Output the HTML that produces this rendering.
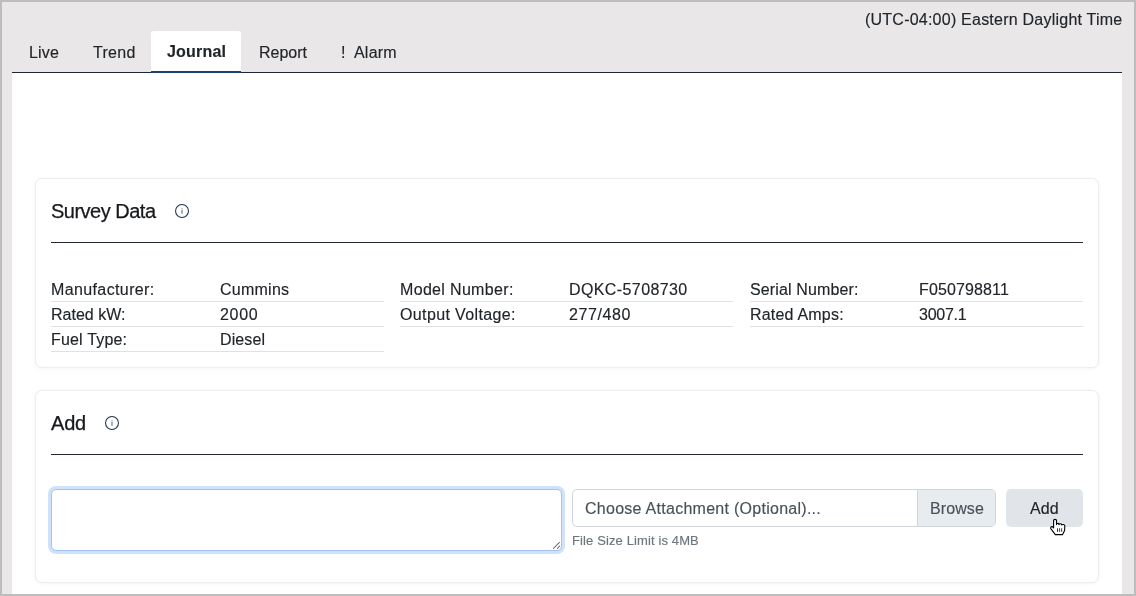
<!DOCTYPE html>
<html><head><meta charset="utf-8">
<style>
*{box-sizing:border-box;margin:0;padding:0}
html,body{width:1136px;height:596px;overflow:hidden;background:#bdbdbd}
body{font-family:"Liberation Sans",sans-serif;color:#212529;position:relative}
.frame{position:absolute;left:2px;top:2px;width:1132px;height:592px;background:#e9e7e8;overflow:hidden}
.t{position:absolute;white-space:nowrap;font-size:16px;line-height:16px;will-change:transform;-webkit-text-stroke:0.15px currentColor}
.panel{position:absolute;left:10px;top:71px;width:1110px;height:530px;background:#fff}
.tabline{position:absolute;left:10px;top:70px;width:1110px;height:1px;background:#202437}
.card{position:absolute;left:33px;width:1064px;background:#fff;border-radius:7px;border:1px solid #eeeef2;box-shadow:0 0 2px rgba(20,20,60,.045),0 1px 4px rgba(20,20,60,.035)}
.hr{position:absolute;height:1px;background:#25283d}
.rowline{position:absolute;height:1px;background:#dfe1e4}
.info{position:absolute;width:16px;height:16px}
</style></head>
<body>
<div class="frame">
<div class="t" style="left:863px;top:10px;letter-spacing:0.23px">(UTC-04:00) Eastern Daylight Time</div>
<div style="position:absolute;left:149px;top:29px;width:90px;height:42px;background:#fff;border-radius:3px 3px 0 0"></div>
<div class="t" style="left:27px;top:43px;letter-spacing:0.15px">Live</div>
<div class="t" style="left:91px;top:43px;letter-spacing:0.3px">Trend</div>
<div class="t" style="left:165px;top:42px;letter-spacing:0.2px;font-weight:bold">Journal</div>
<div class="t" style="left:257px;top:43px">Report</div>
<div class="t" style="left:339px;top:43px">!</div>
<div class="t" style="left:352px;top:43px;letter-spacing:0.2px">Alarm</div>
<div class="panel"></div>
<div class="tabline"></div>
<div style="position:absolute;left:149px;top:69px;width:90px;height:2px;background:#1d406e"></div>
<div class="card" style="top:176px;height:190px"></div>
<div class="t" style="left:49px;top:199px;letter-spacing:-0.5px;font-size:20px;line-height:20px;color:#16181b;-webkit-text-stroke:0.25px #16181b">Survey Data</div>
<svg class="info" style="left:172px;top:201px" viewBox="0 0 16 16"><circle cx="8" cy="8" r="6.45" fill="none" stroke="#1f3352" stroke-width="1.05"/><rect x="7.3" y="6.9" width="1.4" height="3.8" fill="#7f8e96"/><rect x="7.3" y="5.1" width="1.4" height="1.2" fill="#b5ab9c"/></svg>
<div class="hr" style="left:49px;top:240px;width:1032px"></div>
<div class="t" style="left:49px;top:280px;letter-spacing:0.38px">Manufacturer:</div>
<div class="t" style="left:218px;top:280px;letter-spacing:0.25px">Cummins</div>
<div class="rowline" style="left:49px;top:299px;width:333px"></div>
<div class="t" style="left:49px;top:305px">Rated kW:</div>
<div class="t" style="left:218px;top:305px;letter-spacing:0.7px">2000</div>
<div class="rowline" style="left:49px;top:324px;width:333px"></div>
<div class="t" style="left:49px;top:330px;letter-spacing:0.18px">Fuel Type:</div>
<div class="t" style="left:218px;top:330px;letter-spacing:0.1px">Diesel</div>
<div class="rowline" style="left:49px;top:349px;width:333px"></div>
<div class="t" style="left:398px;top:280px;letter-spacing:0.33px">Model Number:</div>
<div class="t" style="left:567px;top:280px;letter-spacing:0.4px">DQKC-5708730</div>
<div class="rowline" style="left:398px;top:299px;width:333px"></div>
<div class="t" style="left:398px;top:305px;letter-spacing:0.37px">Output Voltage:</div>
<div class="t" style="left:567px;top:305px;letter-spacing:0.6px">277/480</div>
<div class="rowline" style="left:398px;top:324px;width:333px"></div>
<div class="t" style="left:748px;top:280px;letter-spacing:0.13px">Serial Number:</div>
<div class="t" style="left:917px;top:280px;letter-spacing:0.13px">F050798811</div>
<div class="rowline" style="left:748px;top:299px;width:333px"></div>
<div class="t" style="left:748px;top:305px;letter-spacing:0.2px">Rated Amps:</div>
<div class="t" style="left:917px;top:305px;letter-spacing:-0.25px">3007.1</div>
<div class="rowline" style="left:748px;top:324px;width:333px"></div>
<div class="card" style="top:388px;height:193px"></div>
<div class="t" style="left:49px;top:411px;letter-spacing:-0.2px;font-size:20px;line-height:20px;color:#16181b;-webkit-text-stroke:0.25px #16181b">Add</div>
<svg class="info" style="left:102px;top:413px" viewBox="0 0 16 16"><circle cx="8" cy="8" r="6.45" fill="none" stroke="#1f3352" stroke-width="1.05"/><rect x="7.3" y="6.9" width="1.4" height="3.8" fill="#7f8e96"/><rect x="7.3" y="5.1" width="1.4" height="1.2" fill="#b5ab9c"/></svg>
<div class="hr" style="left:49px;top:452px;width:1032px"></div>
<div style="position:absolute;left:49px;top:487px;width:511px;height:62px;border:1px solid #9ec3f4;border-radius:5px;box-shadow:0 0 0 3px #cfe1fb;background:#fff"></div>
<svg style="position:absolute;left:548px;top:537px" width="10" height="10" viewBox="0 0 10 10"><path d="M3.3 9.5 L9.7 3.1 M7.2 9.5 L9.7 7" stroke="#333" stroke-width="1.1" stroke-dasharray="0.8 0.61"/></svg>
<div style="position:absolute;left:570px;top:487px;width:424px;height:38px;border:1px solid #ced4da;border-radius:5px;background:#fff;overflow:hidden"><div style="position:absolute;right:0;top:0;width:78px;height:36px;background:#e9ecef;border-left:1px solid #ced4da"></div></div>
<div class="t" style="left:583px;top:499px;letter-spacing:0.27px;color:#495057">Choose Attachment (Optional)...</div>
<div class="t" style="left:928px;top:499px;letter-spacing:0.1px;color:#495057">Browse</div>
<div class="t" style="left:570px;top:532px;letter-spacing:0.12px;font-size:13px;line-height:13px;color:#6c757d">File Size Limit is 4MB</div>
<div style="position:absolute;left:1004px;top:487px;width:77px;height:38px;background:#e1e4e9;border-radius:5px"></div>
<div class="t" style="left:1028px;top:499px;letter-spacing:0.15px">Add</div>
<svg style="position:absolute;left:1047px;top:516px" width="18" height="18" viewBox="0 0 18 18"><path d="M4.6 2.6 C4.6 0.9 7.5 0.9 7.5 2.6 L7.5 6.5 C7.5 5 10 5 10 6.6 C10.5 5.5 12.7 5.5 12.8 7 C13.3 6.2 15.8 6.3 15.8 8 L15.6 12.5 L13.6 16.6 L6.3 16.6 L1.8 10.6 C1.2 9.6 2.3 8 3.6 8.8 L4.6 10 Z" fill="#fff" stroke="#000" stroke-width="1.1" stroke-linejoin="round"/><path d="M8.5 10.3 V13.8 M10.6 10.3 V13.8 M12.7 10.3 V13.8" stroke="#000" stroke-width="0.8"/></svg>
</div>
</body></html>
